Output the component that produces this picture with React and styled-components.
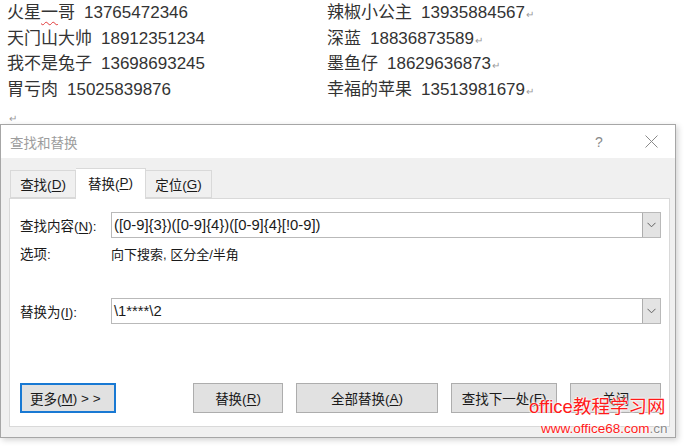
import React from 'react';
import styled, { createGlobalStyle } from 'styled-components';

const Global = createGlobalStyle`
  html, body {
    margin: 0;
    padding: 0;
    background: #fff;
  }
  body {
    width: 685px;
    height: 446px;
    overflow: hidden;
    font-family: "Liberation Sans", "Noto Sans CJK SC", sans-serif;
  }
`;

const Page = styled.div`
  position: relative;
  width: 685px;
  height: 446px;
  overflow: hidden;
`;

const Doc = styled.div`
  height: 124px;
  overflow: hidden;
  padding-left: 7px;
  box-sizing: border-box;
  display: grid;
  grid-template-columns: 320px 1fr;
  grid-auto-rows: 25.5px;
  font-size: 17px;
  line-height: 25.5px;
  color: #333;
`;

const Entry = styled.div`
  white-space: nowrap;
`;

const Phone = styled.span`
  margin-left: 9px;
`;

const Squiggle = styled.span`
  text-decoration: underline wavy #e23b3b;
  text-decoration-thickness: 1px;
  text-underline-offset: 3px;
`;

const Mark = styled.span`
  font-size: 10px;
  color: #9a9a9a;
  margin-left: 1px;
`;

const EndMark = styled.div`
  grid-column: 1 / 3;
  font-size: 10px;
  line-height: 10px;
  padding-top: 12px;
  padding-left: 2px;
  color: #9a9a9a;
`;

const Dialog = styled.div`
  width: 676px;
  height: 314px;
  box-sizing: border-box;
  border: 1px solid #a6a6a6;
  background: #f0f0f0;
  box-shadow: 2px 2px 6px rgba(0, 0, 0, 0.18);
  display: flex;
  flex-direction: column;
  font-size: 13px;
  color: #1a1a1a;
`;

const TitleBar = styled.div`
  height: 33px;
  background: #fff;
  display: flex;
  align-items: center;
  padding-left: 9px;
  padding-right: 17px;
`;

const Title = styled.div`
  flex: 1;
  font-size: 13.5px;
  color: #9d9d9d;
`;

const TitleBtn = styled.div`
  width: 14px;
  margin-left: ${p => p.gap}px;
  color: #8a8a8a;
  font-size: 14px;
  display: flex;
  justify-content: center;
  align-items: center;
`;

const Body = styled.div`
  flex: 1;
  display: flex;
  flex-direction: column;
  padding: 10px 5px 10px 8px;
`;

const TabStrip = styled.div`
  display: flex;
  align-items: flex-end;
  padding-left: 1px;
  height: 30px;
  position: relative;
  z-index: 1;
`;

const Tab = styled.div`
  box-sizing: border-box;
  height: ${p => (p.active ? 31 : 28)}px;
  width: ${p => p.w}px;
  margin-bottom: ${p => (p.active ? -1 : 0)}px;
  border: 1px solid #d9d9d9;
  border-bottom: ${p => (p.active ? 'none' : '1px solid #d9d9d9')};
  border-left: ${p => (p.noLeft ? 'none' : '1px solid #d9d9d9')};
  background: ${p => (p.active ? '#fff' : '#f0f0f0')};
  display: flex;
  align-items: center;
  justify-content: center;
  font-size: 13.5px;
  padding-bottom: ${p => (p.active ? 3 : 0)}px;
`;

const Key = styled.span`
  text-decoration: underline;
  text-underline-offset: 2px;
`;

const Panel = styled.div`
  flex: 1;
  background: #fff;
  border: 1px solid #d9d9d9;
  display: flex;
  flex-direction: column;
  padding: 13px 8px 13px 10px;
`;

const Row = styled.div`
  display: flex;
  align-items: center;
  height: ${p => p.h || 26}px;
  margin-top: ${p => p.mt || 0}px;
`;

const Label = styled.div`
  width: 91px;
  flex: none;
  white-space: nowrap;
  font-size: 13.5px;
`;

const Combo = styled.div`
  flex: 1;
  height: 26px;
  box-sizing: border-box;
  border: 1px solid #b9b9b9;
  display: flex;
  align-items: center;
`;

const ComboText = styled.div`
  flex: 1;
  padding-left: 2px;
  font-size: 14.8px;
  white-space: nowrap;
`;

const ComboBtn = styled.div`
  width: 18px;
  height: 24px;
  box-sizing: border-box;
  border-left: 1px solid #adadad;
  background: #e3e3e3;
  display: flex;
  align-items: center;
  justify-content: center;
`;

const Buttons = styled.div`
  margin-top: auto;
  display: flex;
  align-items: center;
  gap: 13px;
`;

const Button = styled.div`
  width: ${p => p.w}px;
  height: 30px;
  box-sizing: border-box;
  border: ${p => (p.focus ? '2px solid #1979d3' : '1px solid #adadad')};
  background: #e1e1e1;
  display: flex;
  align-items: center;
  justify-content: ${p => (p.focus ? 'flex-start' : 'center')};
  padding-left: ${p => (p.focus ? 8 : 0)}px;
  font-size: 13.5px;
  white-space: pre;
  margin-left: ${p => p.ml || 0}px;
`;

const Watermark = styled.div`
  position: absolute;
  left: 529px;
  top: 398px;
  color: #ff1a1a;
  text-shadow: 0 0 2px #fff, 0 0 2px #fff, 0 0 2px #fff;
  line-height: 1;
`;

const WmTitle = styled.div`
  font-size: 18.5px;
  white-space: nowrap;
`;

const WmUrl = styled.div`
  font-size: 13.5px;
  margin-top: 5px;
  margin-left: 12px;
  white-space: nowrap;
`;

const WmCn = styled.span`
  color: #8a8a8a;
`;

const Chevron = () => (
  <svg width="9" height="6" viewBox="0 0 9 6">
    <path d="M0.5 0.8 L4.5 4.8 L8.5 0.8" fill="none" stroke="#606060" strokeWidth="1" />
  </svg>
);

const CloseIcon = () => (
  <svg width="13" height="13" viewBox="0 0 13 13">
    <path d="M0.5 0.5 L12.5 12.5 M12.5 0.5 L0.5 12.5" stroke="#8a8a8a" strokeWidth="1" />
  </svg>
);

const left = [
  [<>火星<Squiggle>一</Squiggle>哥</>, '13765472346'],
  ['天门山大帅', '18912351234'],
  ['我不是兔子', '13698693245'],
  ['胃亏肉', '15025839876'],
];

const right = [
  ['辣椒小公主', '13935884567'],
  ['深蓝', '18836873589'],
  ['墨鱼仔', '18629636873'],
  ['幸福的苹果', '13513981679'],
];

export default function App() {
  return (
    <Page>
      <Global />
      <Doc>
        {left.map((l, i) => (
          <React.Fragment key={i}>
            <Entry>
              {l[0]}
              <Phone>{l[1]}</Phone>
            </Entry>
            <Entry>
              {right[i][0]}
              <Phone>{right[i][1]}</Phone>
              <Mark>↵</Mark>
            </Entry>
          </React.Fragment>
        ))}
        <EndMark>↵</EndMark>
      </Doc>
      <Dialog>
        <TitleBar>
          <Title>查找和替换</Title>
          <TitleBtn>?</TitleBtn>
          <TitleBtn gap={38}><CloseIcon /></TitleBtn>
        </TitleBar>
        <Body>
          <TabStrip>
            <Tab w={66}>查找(<Key>D</Key>)</Tab>
            <Tab w={70} active noLeft>替换(<Key>P</Key>)</Tab>
            <Tab w={66} noLeft>定位(<Key>G</Key>)</Tab>
          </TabStrip>
          <Panel>
            <Row>
              <Label>查找内容(<Key>N</Key>):</Label>
              <Combo>
                <ComboText>([0-9]{'{3}'})([0-9]{'{4}'})([0-9]{'{4}'}[!0-9])</ComboText>
                <ComboBtn><Chevron /></ComboBtn>
              </Combo>
            </Row>
            <Row h={20} mt={5}>
              <Label>选项:</Label>
              <div>向下搜索, 区分全/半角</div>
            </Row>
            <Row mt={35}>
              <Label>替换为(<Key>I</Key>):</Label>
              <Combo>
                <ComboText>\1****\2</ComboText>
                <ComboBtn><Chevron /></ComboBtn>
              </Combo>
            </Row>
            <Buttons>
              <Button w={96} focus>更多(<Key>M</Key>) &gt; &gt;</Button>
              <Button w={91} ml={64}>替换(<Key>R</Key>)</Button>
              <Button w={142}>全部替换(<Key>A</Key>)</Button>
              <Button w={107}>查找下一处(<Key>F</Key>)</Button>
              <Button w={91}>关闭</Button>
            </Buttons>
          </Panel>
        </Body>
      </Dialog>
      <Watermark>
        <WmTitle>office教程学习网</WmTitle>
        <WmUrl>www.office68.com<WmCn>.cn</WmCn></WmUrl>
      </Watermark>
    </Page>
  );
}
